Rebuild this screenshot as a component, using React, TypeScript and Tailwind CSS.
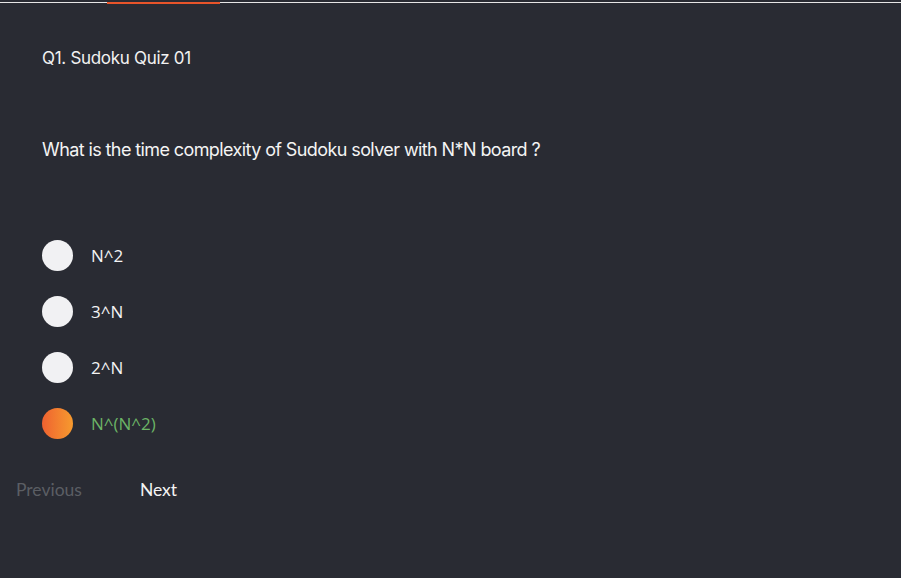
import { useState } from "react";

const options = ["N^2", "3^N", "2^N", "N^(N^2)"];

function App() {
  const [selected, setSelected] = useState(3);

  return (
    <div className="min-h-[578px] w-full bg-[#292b33] pt-[2px]">
      {/* progress line */}
      <div className="h-px w-full bg-[#e6e6e6]">
        <div className="ml-[107px] h-[2px] w-[113px] bg-[#e8542a]" />
      </div>

      <div className="px-[42px] pt-[43px]" style={{ fontFamily: "Inter, sans-serif" }}>
        <h2 className="text-[17px] leading-[24px] tracking-[-0.3px] text-[#f1f1f1]">Q1. Sudoku Quiz 01</h2>
        <p className="mt-[67px] text-[18px] leading-[26px] tracking-[-0.6px] text-[#f4f4f4]">
          What is the time complexity of Sudoku solver with N*N board ?
        </p>
      </div>

      <div className="mt-[77px] flex flex-col gap-[25px] pl-[42px]" style={{ fontFamily: "'Open Sans', sans-serif" }}>
        {options.map((opt, i) => (
          <button
            key={opt}
            onClick={() => setSelected(i)}
            className="flex h-[31px] items-center gap-[18px] text-left"
          >
            <span
              className={
                i === selected
                  ? "h-[31px] w-[31px] rounded-full bg-gradient-to-r from-[#ee6130] to-[#f69a2e]"
                  : "h-[31px] w-[31px] rounded-full bg-[#f1f1f3]"
              }
            />
            <span className={i === selected ? "text-[17px] text-[#6cb466]" : "text-[17px] text-[#f4f4f4]"}>{opt}</span>
          </button>
        ))}
      </div>

      <div className="mt-[38px] flex items-center" style={{ fontFamily: "Lato, sans-serif" }}>
        <button className="pl-[16px] text-[17.5px] text-[#5b5e64]">Previous</button>
        <button className="ml-[58px] text-[17.5px] text-[#f4f4f4]">Next</button>
      </div>
    </div>
  );
}

export default App;
